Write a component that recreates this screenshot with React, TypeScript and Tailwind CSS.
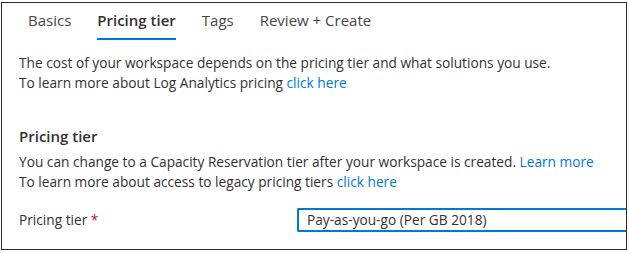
const tabs = ['Basics', 'Pricing tier', 'Tags', 'Review + Create']

const Link = ({ children }: { children: React.ReactNode }) => (
  <a className="text-[#0078d4] cursor-pointer">{children}</a>
)

export default function App() {
  return (
    <div className="w-[629px] h-[253px] bg-white pt-[2px] pl-[1px] font-['Open_Sans',sans-serif] text-[13.7px] text-[#323130]">
      <div className="w-[626px] h-[248px] border border-[#2b2b2b] overflow-hidden">
        <nav className="flex gap-[26px] pl-[26px] pt-[7px] text-[15px] leading-[20px]">
          {tabs.map((t) => (
            <div
              key={t}
              className={
                t === 'Pricing tier'
                  ? 'pb-[8px] border-b-2 border-[#0078d4] font-semibold text-[#323130]'
                  : 'pb-[8px] border-b-2 border-transparent text-[#484644]'
              }
            >
              {t}
            </div>
          ))}
        </nav>
        <div className="pl-[17px] pt-[13px] leading-[20px]">
          <p>The cost of your workspace depends on the pricing tier and what solutions you use.</p>
          <p>
            To learn more about Log Analytics pricing <Link>click here</Link>
          </p>
          <h3 className="mt-[32px] text-[15px] font-semibold leading-[22px]">Pricing tier</h3>
          <p className="mt-[5px]">
            You can change to a Capacity Reservation tier after your workspace is created.{' '}
            <Link>Learn more</Link>
          </p>
          <p>
            To learn more about access to legacy pricing tiers <Link>click here</Link>
          </p>
          <div className="flex items-center mt-[16px]">
            <label className="w-[278px] shrink-0">
              Pricing tier <span className="text-[#a4262c]">*</span>
            </label>
            <div className="flex-1 h-[24px] border-2 border-r-0 border-[#0078d4] rounded-l-[2px] pl-[8px] flex items-center">
              Pay-as-you-go (Per GB 2018)
            </div>
          </div>
        </div>
      </div>
    </div>
  )
}
